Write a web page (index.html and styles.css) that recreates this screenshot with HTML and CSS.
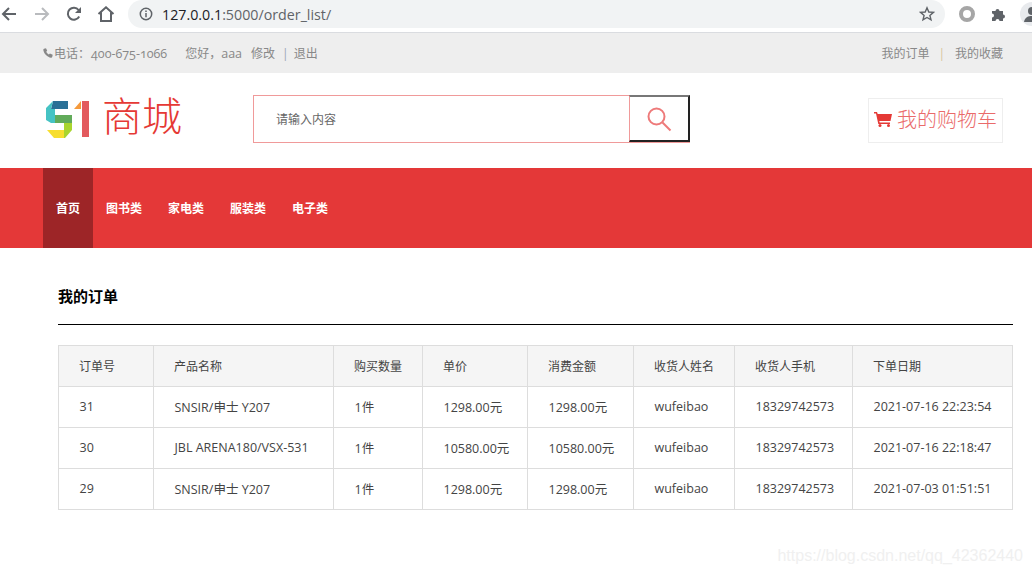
FILE: index.html
```html
<!DOCTYPE html>
<html lang="zh-CN">

<head>
    <meta charset="UTF-8">
    <meta name="viewport" content="width=device-width, initial-scale=1.0">
    <title>我的订单</title>
    <link rel="stylesheet" href="styles.css">
</head>

<body>
    <!-- 浏览器地址栏 -->
    <div class="browser">
        <svg class="b-icon b-back" width="16" height="16" viewBox="0 0 16 16"><path d="M15 8H2.5M8 2 2 8l6 6" fill="none" stroke="#5f6368" stroke-width="2"/></svg>
        <svg class="b-icon b-forward" width="16" height="16" viewBox="0 0 16 16"><path d="M1 8h12.5M8 2l6 6-6 6" fill="none" stroke="#b9bbbe" stroke-width="2"/></svg>
        <svg class="b-icon b-reload" width="16" height="16" viewBox="0 0 16 16"><path d="M13.2 10.5A6 6 0 1 1 12.6 4" fill="none" stroke="#5f6368" stroke-width="2"/><path d="M15 1v6H9z" fill="#5f6368"/></svg>
        <svg class="b-icon b-home" width="18" height="16" viewBox="0 0 18 16"><path d="M1.5 8 9 1.3 16.500 8M4 6.500V15h10V6.500" fill="none" stroke="#5f6368" stroke-width="2"/></svg>
        <div class="omnibox">
            <svg width="14" height="14" viewBox="0 0 14 14"><circle cx="7" cy="7" r="5.700" fill="none" stroke="#5f6368" stroke-width="1.500"/><path d="M7 6v4.200M7 3.500v1.500" stroke="#5f6368" stroke-width="1.500"/></svg>
            <span class="url">127.0.0.1<span class="url-path">:5000/order_list/</span></span>
            <svg class="star" width="16" height="16" viewBox="0 0 16 16"><path d="M8 1.800 9.800 6l4.600.4-3.500 3 1.100 4.500L8 11.500l-4 2.400 1.100-4.500-3.500-3L6.200 6z" fill="none" stroke="#5f6368" stroke-width="1.400"/></svg>
        </div>
        <span class="ext-ring"></span>
        <svg class="ext-puzzle" width="16" height="16" viewBox="0 0 16 16"><path d="M1 5h3.500a2 2 0 1 1 4 0H12v3.500a2 2 0 1 1 0 4V15H8.500a2 2 0 1 0-4 0H1v-3.500a2 2 0 1 0 0-4z" fill="#5f6368"/></svg>
        <span class="avatar"><svg width="24" height="24" viewBox="0 0 24 24"><circle cx="12" cy="9" r="4" fill="#5f6368"/><path d="M4 20c1-5 4-6 8-6s7 1 8 6z" fill="#5f6368"/></svg></span>
    </div>

    <div class="topbar">
        <div class="topbar-left">
            <svg width="10" height="10" viewBox="0 0 10 10"><path d="M1 .8 3 .3l1.200 2.400-1 1c.5 1.200 1.500 2.200 2.700 2.800l1-1.100L9.700 6.700 9.200 9c-.2.500-.6.800-1.200.7C4.500 9.300.8 5.600.3 2 .2 1.400.5 1 1 .8z" fill="#888"/></svg>
            <span class="tel">电话：<span class="serif tel-num">400-675-1066</span></span>
            <span class="hello">您好，<span class="serif">aaa</span></span>
            <a class="edit">修改</a>
            <span class="sep">|</span>
            <a>退出</a>
        </div>
        <div class="topbar-right">
            <a>我的订单</a>
            <span class="sep sep-gold">|</span>
            <a>我的收藏</a>
        </div>
    </div>

    <div class="header">
        <div class="logo">
            <svg width="44" height="38" viewBox="0 0 44 38">
                <path d="M8 1h15v8H6z" fill="#2a7096"/>
                <path d="M8 1 1 8v12l5 3h4V9H6z" fill="#45c3c4"/>
                <path d="M10 15h17v8H10z" fill="#62ab5a"/>
                <path d="M19 23h8v7l-7 8h-1z" fill="#a8d52e"/>
                <path d="M2 30h17v8H9z" fill="#f7de2f"/>
                <path d="M36 1v8h-7z" fill="#f59a3c"/>
                <path d="M37 1h7v36h-7z" fill="#e35a5e"/>
            </svg>
            <span class="logo-text">商城</span>
        </div>
        <div class="search">
            <span class="search-input">请输入内容</span>
            <span class="search-btn">
                <svg width="28" height="28" viewBox="0 0 28 28"><circle cx="11.500" cy="11.500" r="8" fill="none" stroke="#ee7a7a" stroke-width="2"/><path d="m17.500 17.500 8 8" stroke="#ee7a7a" stroke-width="2"/></svg>
            </span>
        </div>
        <div class="cart">
            <svg width="18" height="16" viewBox="0 0 18 16"><path d="M0 1h3l.7 2H18l-1.500 7H5.300l.4 1.500H16V13H4.300L2 2.500H0z" fill="#e53935"/><circle cx="6" cy="14.500" r="1.500" fill="#e53935"/><circle cx="14.500" cy="14.500" r="1.500" fill="#e53935"/></svg>
            <span>我的购物车</span>
        </div>
    </div>

    <div class="nav">
        <a class="active">首页</a>
        <a>图书类</a>
        <a>家电类</a>
        <a>服装类</a>
        <a>电子类</a>
    </div>

    <div class="content">
        <h2>我的订单</h2>
        <table>
            <thead>
                <tr>
                    <th class="c1">订单号</th>
                    <th class="c2">产品名称</th>
                    <th class="c3">购买数量</th>
                    <th class="c4">单价</th>
                    <th class="c5">消费金额</th>
                    <th class="c6">收货人姓名</th>
                    <th class="c7">收货人手机</th>
                    <th class="c8">下单日期</th>
                </tr>
            </thead>
            <tbody>
                <tr>
                    <td>31</td>
                    <td>SNSIR/申士 Y207</td>
                    <td>1件</td>
                    <td>1298.00元</td>
                    <td>1298.00元</td>
                    <td>wufeibao</td>
                    <td>18329742573</td>
                    <td>2021-07-16 22:23:54</td>
                </tr>
                <tr>
                    <td>30</td>
                    <td>JBL ARENA180/VSX-531</td>
                    <td>1件</td>
                    <td>10580.00元</td>
                    <td>10580.00元</td>
                    <td>wufeibao</td>
                    <td>18329742573</td>
                    <td>2021-07-16 22:18:47</td>
                </tr>
                <tr>
                    <td>29</td>
                    <td>SNSIR/申士 Y207</td>
                    <td>1件</td>
                    <td>1298.00元</td>
                    <td>1298.00元</td>
                    <td>wufeibao</td>
                    <td>18329742573</td>
                    <td>2021-07-03 01:51:51</td>
                </tr>
            </tbody>
        </table>
    </div>

    <div class="watermark">https://blog.csdn.net/qq_42362440</div>
</body>

</html>
```

FILE: styles.css
```css
html,
body {
    height: 573px;
    overflow: hidden;
}

body {
    margin: 0;
    position: relative;
    font-family: "Open Sans", "Noto Sans CJK SC", sans-serif;
    font-size: 12px;
    color: #444;
    background-color: #fff;
}

svg {
    display: block;
    flex: none;
}

/* 浏览器地址栏 */
.browser {
    height: 28px;
    padding: 0 0 4px 1px;
    border-bottom: 1px solid #dadce0;
    display: flex;
    align-items: center;
    overflow: hidden;
    background-color: #fff;
}

.b-forward {
    margin-left: 17px;
}

.b-reload {
    margin-left: 16px;
}

.b-home {
    margin-left: 15px;
}

.omnibox {
    width: 817px;
    height: 28px;
    margin-left: 13px;
    padding: 0 10px 0 11px;
    box-sizing: border-box;
    display: flex;
    align-items: center;
    flex: none;
    background-color: #f1f3f4;
    border-radius: 14px;
}

.url {
    margin-left: 9px;
    font-family: "Open Sans", sans-serif;
    font-size: 14.250px;
    color: #202124;
}

.url-path {
    color: #5f6368;
}

.star {
    margin-left: auto;
}

.ext-ring {
    width: 16px;
    height: 16px;
    margin-left: 14px;
    box-sizing: border-box;
    border: 4px solid #a6a6a6;
    border-radius: 50%;
    flex: none;
}

.ext-puzzle {
    margin-left: 16px;
}

.avatar {
    width: 24px;
    height: 24px;
    margin-left: 13px;
    border-radius: 50%;
    background-color: #e8eaed;
    flex: none;
}

/* 顶部信息条 */
.topbar {
    height: 40px;
    padding: 0 29px 0 43px;
    display: flex;
    align-items: center;
    justify-content: space-between;
    background-color: #eee;
    color: #888;
}

.topbar-left,
.topbar-right {
    display: flex;
    align-items: center;
}

.serif {
    font-family: "Open Sans", "Liberation Serif", serif;
    font-variant-numeric: oldstyle-nums;
    font-size: 12.500px;
}

.tel {
    margin-left: 1px;
}

.tel-num {
    margin-left: 1px;
}

.hello {
    margin-left: 18px;
}

.edit {
    margin-left: 9px;
}

.sep {
    margin: 0 5px 0 7px;
    color: #9aa7b5;
}

.sep-gold {
    margin: 0 10px 0 9px;
    color: #d8c49a;
}

/* logo 和搜索 */
.header {
    height: 91px;
    padding: 0 29px 4px 45px;
    display: flex;
    align-items: center;
}

.logo {
    width: 208px;
    display: flex;
    align-items: center;
    flex: none;
}

.logo-text {
    margin: 0 0 6px 13px;
    font-size: 40px;
    font-weight: 300;
    line-height: 48px;
    color: #e53935;
}

.search {
    width: 437px;
    height: 48px;
    box-sizing: border-box;
    display: flex;
    border: 1px solid #f09a9a;
    border-right: none;
}

.search-input {
    flex: 1;
    padding-left: 22px;
    line-height: 47px;
    color: #666;
}

.search-btn {
    width: 61px;
    height: 47px;
    box-sizing: border-box;
    display: flex;
    align-items: center;
    justify-content: center;
    border-left: 1px solid #f09a9a;
    border-top: 2px solid #777;
    border-right: 2px solid #222;
    border-bottom: 2px solid #222;
    margin-top: -1px;
    padding-top: 2px;
}

.cart {
    margin: 4px 0 0 auto;
    width: 135px;
    height: 45px;
    padding-bottom: 4px;
    box-sizing: border-box;
    display: flex;
    align-items: center;
    justify-content: center;
    gap: 5px;
    border: 1px solid #eee;
    font-size: 20px;
    font-weight: 300;
    color: #ea6a6a;
}

/* 导航 */
.nav {
    height: 80px;
    padding-left: 43px;
    display: flex;
    background-color: #e43838;
}

.nav a {
    padding: 0 13px;
    line-height: 82px;
    font-size: 12px;
    font-weight: 700;
    color: #fff;
}

.nav .active {
    width: 24px;
    background-color: #9d2527;
}

/* 订单表格 */
.content {
    padding: 0 19px 0 58px;
}

h2 {
    margin: 0 0 20px;
    height: 76px;
    line-height: 97px;
    border-bottom: 1px solid #000;
    font-size: 15px;
    font-weight: 700;
    color: #000;
}

table {
    width: 955px;
    table-layout: fixed;
    border-collapse: collapse;
}

th,
td {
    height: 40px;
    padding: 0 20px;
    box-sizing: content-box;
    border: 1px solid #ddd;
    font-weight: 400;
    text-align: left;
    white-space: nowrap;
    color: #444;
}

td {
    height: 39px;
    padding: 0 20px 1px 20.500px;
    font-size: 12.500px;
}

th {
    background-color: #f5f5f5;
}

.c1 {
    width: 54px;
}

.c2 {
    width: 139px;
}

.c3 {
    width: 48px;
}

.c4 {
    width: 64px;
}

.c5 {
    width: 65px;
}

.c6 {
    width: 60px;
}

.c7 {
    width: 77px;
}

.c8 {
    width: 119px;
}

.watermark {
    position: absolute;
    right: 9px;
    bottom: 8px;
    font-family: "Liberation Sans", sans-serif;
    font-size: 16px;
    color: #f0f0f0;
}
```
